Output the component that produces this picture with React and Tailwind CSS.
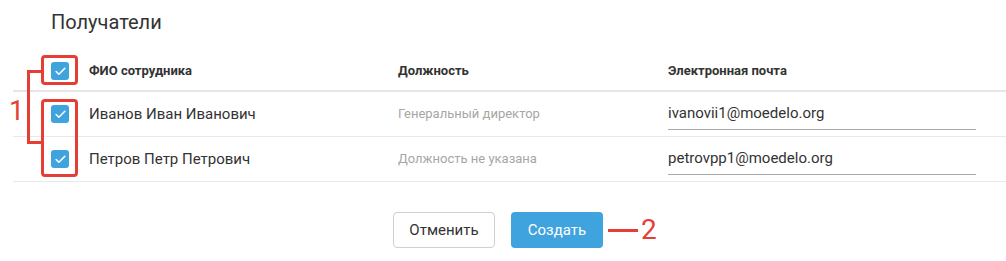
import { Check } from "lucide-react";

const recipients = [
  { name: "Иванов Иван Иванович", position: "Генеральный директор", email: "ivanovii1@moedelo.org" },
  { name: "Петров Петр Петрович", position: "Должность не указана", email: "petrovpp1@moedelo.org" },
];

function Checkbox() {
  return (
    <div className="flex h-[18px] w-[18px] items-center justify-center rounded-[3px] bg-[#3fa3de]">
      <Check size={13} strokeWidth={3} className="text-white" />
    </div>
  );
}

export default function App() {
  return (
    <div className="relative h-[261px] w-[1006px] overflow-hidden bg-white font-['Roboto',sans-serif] text-[#333]">
      <h2 className="pl-[51px] pt-[10px] text-[20px] leading-[24px] text-[#333]">Получатели</h2>

      <div className="ml-[13px] mt-[18px]">
        <div className="flex h-[40px] items-center border-b-2 border-[#e6e6e6] pl-[38px] text-[13px] font-bold text-[#333]">
          <div className="w-[38px]">
            <Checkbox />
          </div>
          <div className="w-[309px]">ФИО сотрудника</div>
          <div className="w-[270px]">Должность</div>
          <div>Электронная почта</div>
        </div>

        {recipients.map((r) => (
          <div key={r.email} className="flex h-[45px] items-center border-b border-[#e9e9e9] pl-[38px]">
            <div className="w-[38px]">
              <Checkbox />
            </div>
            <div className="w-[309px] text-[15px] leading-[20px] text-[#333]">{r.name}</div>
            <div className="w-[270px] text-[13px] text-[#a6a6a6]">{r.position}</div>
            <div className="w-[308px] border-b border-[#a9a9a9] pb-[6px] pt-[5px] text-[15px] leading-[20px] text-[#333]">
              {r.email}
            </div>
          </div>
        ))}
      </div>

      <div className="mt-[30px] flex items-center pl-[393px]">
        <button className="h-[36px] w-[102px] rounded-[4px] border border-[#d0d0d0] bg-white text-[15px] text-[#333]">
          Отменить
        </button>
        <button className="ml-[16px] h-[36px] w-[92px] rounded-[4px] bg-[#3fa3de] text-[15px] text-white">
          Создать
        </button>
        <div className="ml-[5px] flex items-center gap-[3px] text-[28px] leading-none text-[#e53e35]">
          <div className="h-[3px] w-[30px] bg-[#e53e35]" />
          <span>2</span>
        </div>
      </div>

      {/* annotation overlay */}
      <div className="absolute left-[41px] top-[55px] h-[30px] w-[37px] rounded-[4px] border-[3px] border-[#e53e35]" />
      <div className="absolute left-[41px] top-[99px] h-[78px] w-[37px] rounded-[4px] border-[3px] border-[#e53e35]" />
      <div className="absolute left-[27px] top-[70px] h-[74px] w-[15px] border-y-[3px] border-l-[3px] border-[#e53e35]" />
      <div className="absolute left-[9px] top-[96px] text-[27px] leading-[30px] text-[#e53e35]">1</div>
    </div>
  );
}
